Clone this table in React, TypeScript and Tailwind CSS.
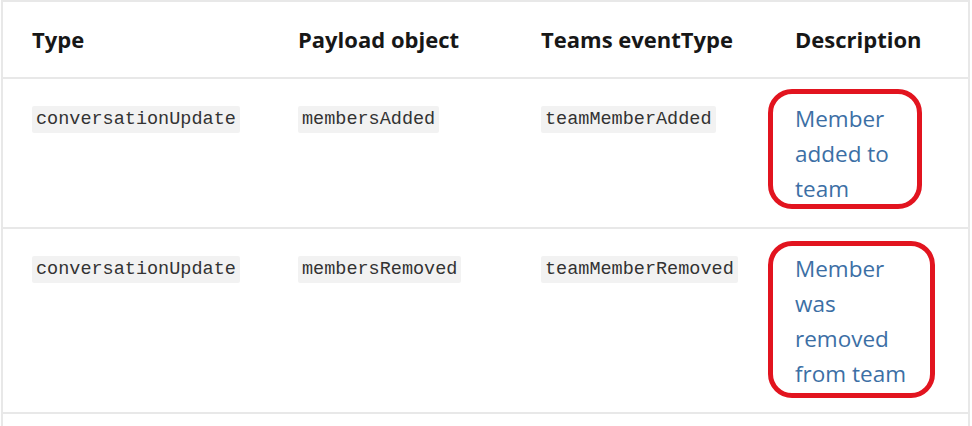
import React from 'react';

type Row = {
	type: string;
	payload: string;
	eventType: string;
	description: string;
	mark: string;
};

const rows: Row[] = [
	{
		type: 'conversationUpdate',
		payload: 'membersAdded',
		eventType: 'teamMemberAdded',
		description: 'Member added to team',
		mark: 'left-[-27px] top-[-12px] w-[154px] h-[120px]',
	},
	{
		type: 'conversationUpdate',
		payload: 'membersRemoved',
		eventType: 'teamMemberRemoved',
		description: 'Member was removed from team',
		mark: 'left-[-27px] top-[-10px] w-[167px] h-[157px]',
	},
];

const cols = 'grid grid-cols-[266px_243px_254px_1fr]';

const Code: React.FC<{ children: React.ReactNode }> = ({ children }) => (
	<code className="bg-[#f2f2f2] px-[4px] py-[3px] rounded-[2px] text-[18.5px] text-[#333333] font-['Liberation_Mono',monospace]">
		{children}
	</code>
);

const App: React.FC = () => {
	return (
		<div className="w-[972px] h-[426px] bg-white overflow-hidden font-['Open_Sans',sans-serif]">
			<div className="ml-[1px] w-[969px] h-[426px] border-x-2 border-[#e8e8e8]">
				<div className={`${cols} border-t-2 border-b-2 border-[#e8e8e8] h-[79px] items-center text-[22px] font-bold text-[#171717] leading-[35px]`}>
					<div className="pl-[29px]">Type</div>
					<div className="pl-[29px]">Payload object</div>
					<div className="pl-[29px]">Teams eventType</div>
					<div className="pl-[29px]">Description</div>
				</div>
				{rows.map((row) => (
					<div
						key={row.eventType}
						className={`${cols} border-b-2 border-[#e8e8e8] pt-[22px] pb-[21px] leading-[35px]`}
					>
						<div className="pl-[29px]">
							<Code>{row.type}</Code>
						</div>
						<div className="pl-[29px]">
							<Code>{row.payload}</Code>
						</div>
						<div className="pl-[29px]">
							<Code>{row.eventType}</Code>
						</div>
						<div className="pl-[29px]">
							<div className="relative w-[125px] text-[22.5px] text-[#3c6fa5]">
								{row.description}
								<div className={`absolute ${row.mark} border-[5px] border-[#e2141f] rounded-[24px] pointer-events-none`} />
							</div>
						</div>
					</div>
				))}
			</div>
		</div>
	);
};

export default App;
